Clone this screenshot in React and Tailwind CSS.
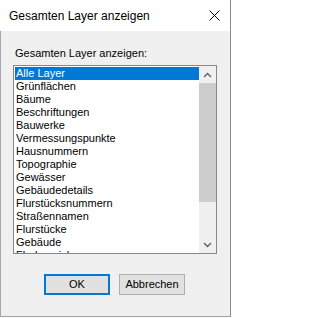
import React, { useState } from "react";

// Einträge der Layer-Liste
const layer = [
  "Alle Layer",
  "Grünflächen",
  "Bäume",
  "Beschriftungen",
  "Bauwerke",
  "Vermessungspunkte",
  "Hausnummern",
  "Topographie",
  "Gewässer",
  "Gebäudedetails",
  "Flurstücksnummern",
  "Straßennamen",
  "Flurstücke",
  "Gebäude",
  "Flurbezeichnungen",
];

const Pfeil = ({ hoch }) => (
  <svg width="9" height="6" viewBox="0 0 9 6" className="text-[#606060]">
    <path
      d={hoch ? "M1 5 L4.5 1.5 L8 5" : "M1 1 L4.5 4.5 L8 1"}
      fill="none"
      stroke="currentColor"
      strokeWidth="1.4"
    />
  </svg>
);

const App = () => {
  const [auswahl, setAuswahl] = useState(0);

  return (
    <div className="w-[232px] h-[318px] bg-white font-['Liberation_Sans',Arial,sans-serif] text-black">
      <div className="w-[231px] h-[317px] flex flex-col">
        {/* Titelleiste */}
        <div className="h-[31px] shrink-0 bg-white border-r border-[#8c8c8c] flex items-center justify-between pl-[9px] pr-[10px]">
          <span className="text-[12px] leading-none">Gesamten Layer anzeigen</span>
          <svg width="11" height="11" viewBox="0 0 11 11">
            <path d="M0.5 0.5 L10.5 10.5 M10.5 0.5 L0.5 10.5" stroke="#000" strokeWidth="1" />
          </svg>
        </div>

        {/* Inhalt */}
        <div className="flex-1 bg-[#f0f0f0] border-l border-r border-b border-l-[#a8a8a8] border-r-[#8c8c8c] border-b-[#a0a0a0] flex flex-col pt-[16px] pl-[12px]">
          <label className="text-[11px] leading-[13px] pl-[2px] mb-[5px]">Gesamten Layer anzeigen:</label>

          <div className="w-[204px] h-[189px] border border-[#828790] bg-white flex">
            <ul className="flex-1 pt-[1px] pl-[1px] overflow-hidden">
              {layer.map((name, index) => (
                <li
                  key={name}
                  onClick={() => setAuswahl(index)}
                  className={
                    index === auswahl
                      ? "h-[13px] leading-[13px] text-[11px] pl-[1px] whitespace-nowrap bg-[#0078d7] text-white"
                      : "h-[13px] leading-[13px] text-[11px] pl-[1px] whitespace-nowrap"
                  }
                >
                  {name}
                </li>
              ))}
            </ul>
            {/* Scrollleiste */}
            <div className="w-[17px] bg-[#f0f0f0] flex flex-col">
              <div className="h-[17px] flex items-center justify-center">
                <Pfeil hoch />
              </div>
              <div className="h-[119px] bg-[#cdcdcd]" />
              <div className="flex-1" />
              <div className="h-[17px] flex items-center justify-center">
                <Pfeil />
              </div>
            </div>
          </div>

          <div className="flex justify-center gap-[9px] mt-[20px] pr-[14px]">
            <button className="w-[66px] h-[21px] bg-[#e1e1e1] border-2 border-[#0078d7] text-[11px] leading-none">
              OK
            </button>
            <button className="w-[66px] h-[21px] bg-[#e1e1e1] border border-[#adadad] text-[11px] leading-none">
              Abbrechen
            </button>
          </div>
        </div>
      </div>
    </div>
  );
};

export default App;
